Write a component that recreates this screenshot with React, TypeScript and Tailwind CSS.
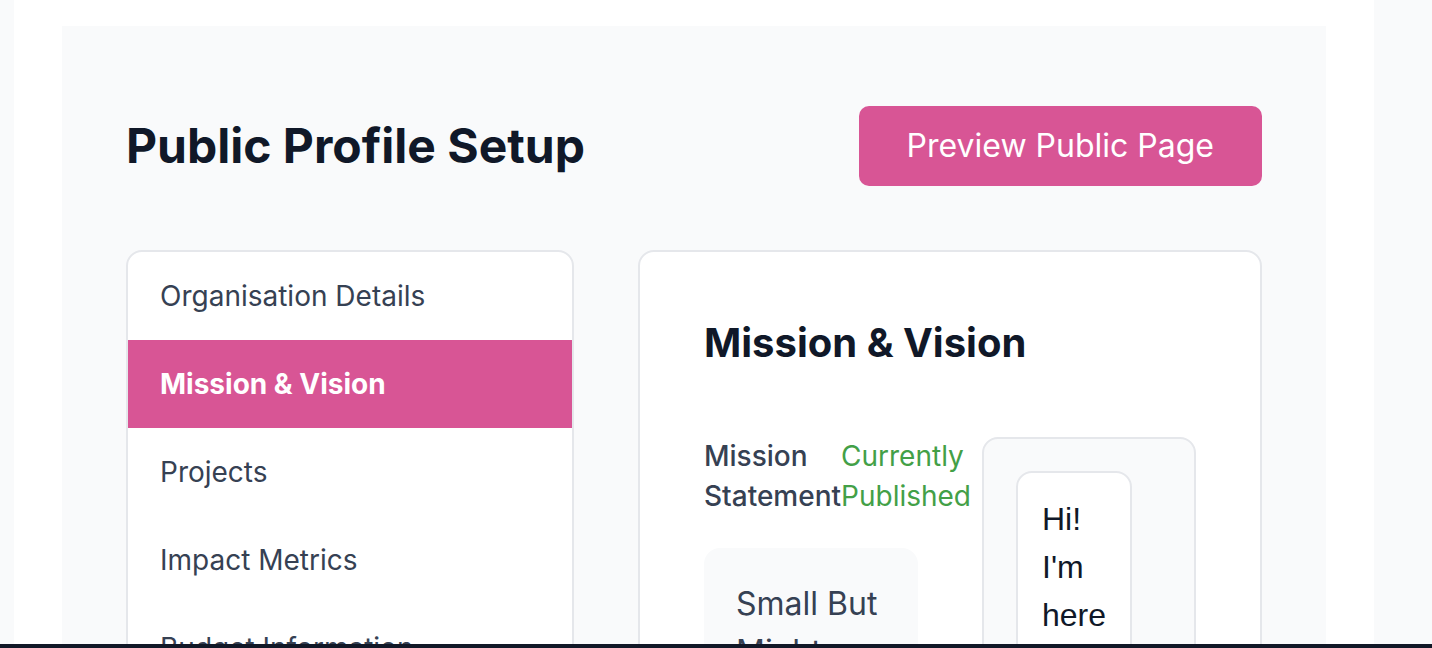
import React from "react";

const items = [
  "Organisation Details",
  "Mission & Vision",
  "Projects",
  "Impact Metrics",
  "Budget Information",
  "Team Members",
];

export default function App() {
  return (
    <div className="min-h-screen bg-gray-50 font-['Inter',sans-serif]">
      <div className="ml-[14px] w-[1360px] min-h-screen bg-white px-12 pt-[26px]">
        <div className="bg-gray-50 px-16 pt-20 pb-16">
          <div className="flex items-center justify-between">
            <h1 className="text-[48px] leading-[56px] font-bold text-gray-900">
              Public Profile Setup
            </h1>
            <button className="rounded-[10px] bg-[#d85595] px-12 py-4 text-[32px] leading-[48px] text-white">
              Preview Public Page
            </button>
          </div>

          <div className="mt-16 flex items-start gap-16">
            <nav className="w-[448px] shrink-0 overflow-hidden rounded-2xl border-2 border-gray-200 bg-white">
              {items.map((it) => {
                const active = it === "Mission & Vision";
                return (
                  <div
                    key={it}
                    className={
                      active
                        ? "bg-[#d85595] px-8 py-6 text-[28px] leading-[40px] font-bold text-white"
                        : "px-8 py-6 text-[28px] leading-[40px] text-gray-700"
                    }
                  >
                    {it}
                  </div>
                );
              })}
            </nav>

            <section className="flex-1 rounded-2xl border-2 border-gray-200 bg-white p-16">
              <h2 className="mb-16 text-[40px] leading-[54px] font-bold text-gray-900">
                Mission &amp; Vision
              </h2>
              <div className="grid grid-cols-2 gap-16 pt-[2px]">
                <div className="flex flex-col gap-8">
                  <div className="flex justify-between">
                    <span className="text-[28px] leading-[40px] font-medium text-gray-700">
                      Mission Statement
                    </span>
                    <span className="text-[28px] leading-[40px] text-[#43a047]">
                      Currently Published
                    </span>
                  </div>
                  <div className="rounded-2xl bg-gray-50 p-8 text-[32px] leading-[48px] text-gray-700">
                    Small But Mighty helps local communities thrive.
                  </div>
                </div>
                <div className="mt-px rounded-2xl border-2 border-gray-200 bg-gray-50 p-8">
                  <div className="w-[116px] rounded-2xl border-2 border-gray-200 bg-white px-6 pt-[22px] pb-6 font-['Liberation_Sans',Arial,sans-serif] text-[32px] leading-[48px] text-gray-900">
                    Hi! I'm here to help
                  </div>
                </div>
              </div>
            </section>
          </div>
        </div>
      </div>
      <div className="fixed bottom-0 left-0 h-[4px] w-full bg-[#111827]" />
    </div>
  );
}
